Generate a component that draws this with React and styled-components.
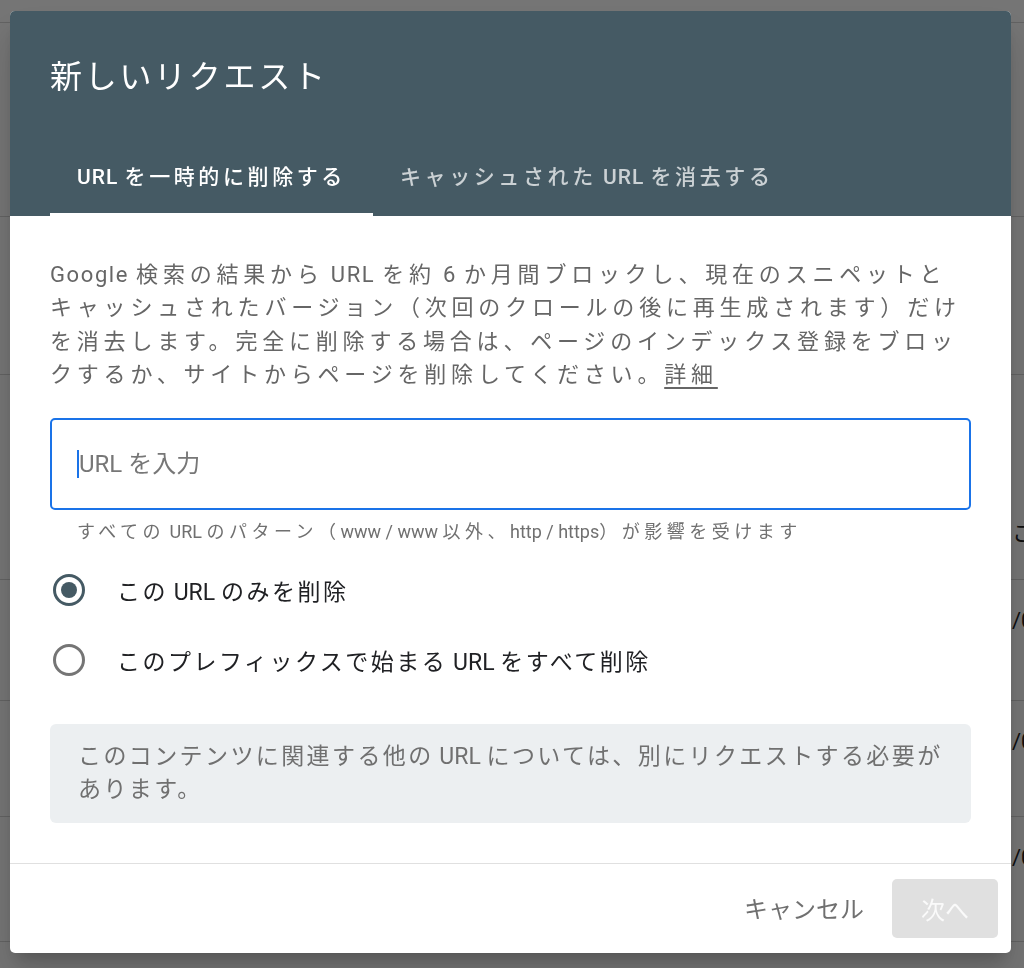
import React from 'react';
import styled, { createGlobalStyle } from 'styled-components';

const GlobalStyle = createGlobalStyle`
  html, body {
    margin: 0;
    padding: 0;
    width: 1024px;
    height: 968px;
    overflow: hidden;
    font-family: Roboto, "Noto Sans CJK JP", sans-serif;
  }
`;

// japanese runs get their own tracking, latin runs stay as they are
const CJK_RUN = /([\u3001-\u30ff\u3400-\u9fff\uff00-\uffef]+)/;

function Spaced({ ls, children }) {
  return String(children)
    .split(CJK_RUN)
    .map((part, i) =>
      CJK_RUN.test(part) ? (
        <Cjk key={i} $ls={ls}>
          {part}
        </Cjk>
      ) : (
        part
      )
    );
}

const rows = [
  { h: 23, text: '' },
  { h: 194, text: '' },
  { h: 158, text: '' },
  { h: 205, text: 'こ', pad: 146 },
  { h: 121, text: '/01/2021', pad: 28 },
  { h: 116, text: '/01/2021', pad: 28 },
  { h: 125, text: '/01/2021', pad: 28 },
];

function App() {
  return (
    <>
      <GlobalStyle />
      <Page>
        {rows.map((r, i) => (
          <Row key={i} style={{ height: r.h }} $pad={r.pad || 0}>
            <Cell>{r.text}</Cell>
          </Row>
        ))}
      </Page>
      <Scrim />
      <Dialog>
        <Header>
          <Title>新しいリクエスト</Title>
          <Tabs>
            <Tab $active>
              <TabLabel>
                <Spaced ls={3.6}>URL を一時的に削除する</Spaced>
              </TabLabel>
            </Tab>
            <Tab>
              <TabLabel>
                <Spaced ls={3.6}>キャッシュされた URL を消去する</Spaced>
              </TabLabel>
            </Tab>
          </Tabs>
        </Header>
        <Body>
          <Description>
            <Spaced ls={4.8}>
              Google 検索の結果から URL を約 6 か月間ブロックし、現在のスニペットとキャッシュされたバージョン（次回のクロールの後に再生成されます）だけを消去します。完全に削除する場合は、ページのインデックス登録をブロックするか、サイトからページを削除してください。
            </Spaced>
            <MoreLink>
              <Spaced ls={4.8}>詳細</Spaced>
            </MoreLink>
          </Description>
          <UrlField>
            <Caret />
            <UrlInput placeholder="URL を入力" />
          </UrlField>
          <Hint>
            <Spaced ls={4.5}>すべての URL のパターン（www / www 以外、http / https）が影響を受けます</Spaced>
          </Hint>
          <RadioGroup>
            <RadioRow>
              <RadioCircle $checked />
              <RadioLabel>
                <Spaced ls={2.5}>この URL のみを削除</Spaced>
              </RadioLabel>
            </RadioRow>
            <RadioRow>
              <RadioCircle />
              <RadioLabel>
                <Spaced ls={2.5}>このプレフィックスで始まる URL をすべて削除</Spaced>
              </RadioLabel>
            </RadioRow>
          </RadioGroup>
          <InfoBox>
            <Spaced ls={2.4}>このコンテンツに関連する他の URL については、別にリクエストする必要があります。</Spaced>
          </InfoBox>
        </Body>
        <Footer>
          <TextButton>キャンセル</TextButton>
          <NextButton disabled>次へ</NextButton>
        </Footer>
      </Dialog>
    </>
  );
}

export default App;

const Cjk = styled.span`
  letter-spacing: ${p => p.$ls}px;
`;

const Page = styled.div`
  width: 1024px;
  height: 968px;
  background: #fff;
  display: flex;
  flex-direction: column;
  overflow: hidden;
`;

const Row = styled.div`
  display: flex;
  align-items: flex-start;
  border-bottom: 1px solid #d6d6d6;
  padding-top: ${p => p.$pad}px;
  box-sizing: border-box;
  flex-shrink: 0;
`;

const Cell = styled.div`
  margin-left: 1012px;
  white-space: nowrap;
  font-size: 22px;
  line-height: 26px;
  color: #202124;
`;

const Scrim = styled.div`
  position: fixed;
  inset: 0;
  background: rgba(0, 0, 0, 0.54);
`;

const Dialog = styled.div`
  position: fixed;
  top: 11px;
  left: 10px;
  width: 1001px;
  height: 942px;
  background: #fff;
  border-radius: 5px;
  overflow: hidden;
  display: flex;
  flex-direction: column;
  box-shadow: 0 11px 15px -7px rgba(0,0,0,0.2), 0 24px 38px 3px rgba(0,0,0,0.14);
`;

const Header = styled.div`
  background: #455a64;
  height: 205px;
  display: flex;
  flex-direction: column;
  justify-content: space-between;
  padding: 0 0 0 40px;
  flex-shrink: 0;
`;

const Title = styled.div`
  color: #fff;
  font-size: 32px;
  line-height: 48px;
  font-weight: 400;
  padding-top: 42px;
  letter-spacing: 2.7px;
`;

const Tabs = styled.div`
  display: flex;
  height: 72px;
`;

const Tab = styled.div`
  display: flex;
  align-items: center;
  padding: 0 27px 8px;
  font-size: 21px;
  font-weight: 500;
  color: ${p => (p.$active ? '#fff' : 'rgba(255,255,255,0.72)')};
  border-bottom: 3px solid ${p => (p.$active ? '#fff' : 'transparent')};
  box-sizing: border-box;
`;

const TabLabel = styled.span`
  white-space: nowrap;
  letter-spacing: 1px;
`;

const Body = styled.div`
  flex: 1;
  padding: 42px 40px 0;
  display: flex;
  flex-direction: column;
`;

const Description = styled.p`
  margin: 0;
  padding-right: 6px;
  font-size: 22px;
  line-height: 33.3px;
  letter-spacing: 1.6px;
  color: #666;
`;

const MoreLink = styled.a`
  color: #666;
  text-decoration: underline;
  text-underline-offset: 5px;
`;

const UrlField = styled.div`
  margin-top: 27px;
  height: 92px;
  border: 2px solid #1a73e8;
  border-radius: 5px;
  display: flex;
  align-items: center;
  padding-left: 25px;
  box-sizing: border-box;
`;

const Caret = styled.span`
  width: 2px;
  height: 28px;
  background: #1a73e8;
`;

const UrlInput = styled.input`
  flex: 1;
  border: 0;
  outline: none;
  background: transparent;
  font-family: inherit;
  font-size: 24px;
  color: #202124;
  padding: 0;
  &::placeholder {
    color: #777;
  }
`;

const Hint = styled.div`
  margin-top: 7px;
  padding-left: 27px;
  font-size: 18px;
  color: #707070;
`;

const RadioGroup = styled.div`
  display: flex;
  flex-direction: column;
  gap: 38px;
  margin-top: 31px;
`;

const RadioRow = styled.label`
  display: flex;
  align-items: center;
  gap: 32px;
  height: 32px;
  padding-left: 3px;
`;

const RadioCircle = styled.span`
  width: 32px;
  height: 32px;
  border-radius: 50%;
  border: 3px solid ${p => (p.$checked ? '#455a64' : '#757575')};
  box-sizing: border-box;
  display: flex;
  align-items: center;
  justify-content: center;
  flex-shrink: 0;
  &::after {
    content: '';
    width: 16px;
    height: 16px;
    border-radius: 50%;
    background: ${p => (p.$checked ? '#455a64' : 'transparent')};
  }
`;

const RadioLabel = styled.span`
  font-size: 23px;
  color: #202124;
`;

const InfoBox = styled.div`
  margin-top: 48px;
  background: #eceff1;
  border-radius: 6px;
  padding: 16px 28px 17px;
  font-size: 23px;
  line-height: 33px;
  color: #707070;
`;

const Footer = styled.div`
  height: 89px;
  border-top: 1px solid #e0e0e0;
  display: flex;
  align-items: center;
  justify-content: flex-end;
  gap: 28px;
  padding-right: 13px;
  flex-shrink: 0;
`;

const TextButton = styled.button`
  border: 0;
  background: transparent;
  font-family: inherit;
  font-size: 24px;
  color: #707070;
  padding: 0 0 3px;
`;

const NextButton = styled.button`
  width: 106px;
  height: 59px;
  border: 0;
  border-radius: 5px;
  background: #e0e0e0;
  color: #fafafa;
  font-family: inherit;
  font-size: 24px;
`;
